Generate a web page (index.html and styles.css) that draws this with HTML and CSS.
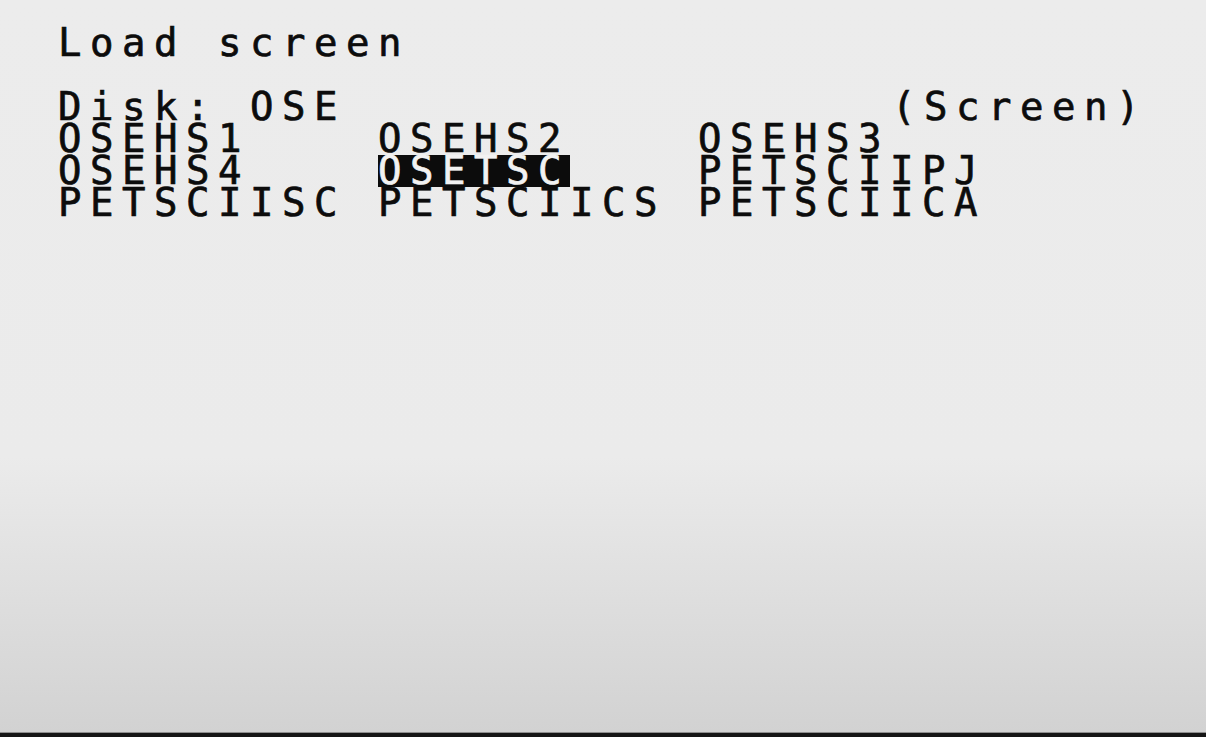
FILE: index.html
```html
<!DOCTYPE html>
<html lang="en">
<head>
<meta charset="utf-8">
<title>Load screen</title>
<link rel="stylesheet" href="styles.css">
</head>
<body>
<main class="screen">
  <h1 class="title">Load screen</h1>
  <div class="disk-row">
    <span class="disk-name">Disk: OSE</span>
    <span class="disk-type">(Screen)</span>
  </div>
  <ul class="files">
    <li class="file">OSEHS1</li>
    <li class="file">OSEHS2</li>
    <li class="file">OSEHS3</li>
    <li class="file">OSEHS4</li>
    <li class="file"><span class="selected">OSETSC</span></li>
    <li class="file">PETSCIIPJ</li>
    <li class="file">PETSCIISC</li>
    <li class="file">PETSCIICS</li>
    <li class="file">PETSCIICA</li>
  </ul>
</main>
</body>
</html>
```
FILE: styles.css
```css
html, body {
  margin: 0;
  padding: 0;
  height: 100%;
}

body {
  background: linear-gradient(to bottom, #ececec 0%, #ebebeb 62%, #d2d2d2 99.3%);
  border-bottom: 4px solid #151515;
  box-sizing: border-box;
  box-shadow: inset 0 -1px 0 #8e8e8e;
  overflow: hidden;
}

.screen {
  padding: 27px 0 0 58px;
  font-family: "DejaVu Sans Mono", "Liberation Mono", monospace;
  font-size: 39px;
  line-height: 32px;
  letter-spacing: calc(32px - 0.6021em);
  color: #0c0c0c;
  -webkit-text-stroke: 0.7px currentColor;
}

.title {
  margin: 0 0 32px 0;
  font: inherit;
  letter-spacing: inherit;
  white-space: pre;
}

.disk-row {
  display: flex;
  width: 1090px;
  white-space: pre;
}

.disk-type {
  margin-left: auto;
}

.files {
  list-style: none;
  margin: 0;
  padding: 0;
  display: grid;
  grid-template-columns: repeat(3, 320px);
}

.file {
  height: 32px;
  white-space: pre;
}

.selected {
  display: inline-block;
  height: 32px;
  background: #0c0c0c;
  color: #f2f2f2;
}
```
